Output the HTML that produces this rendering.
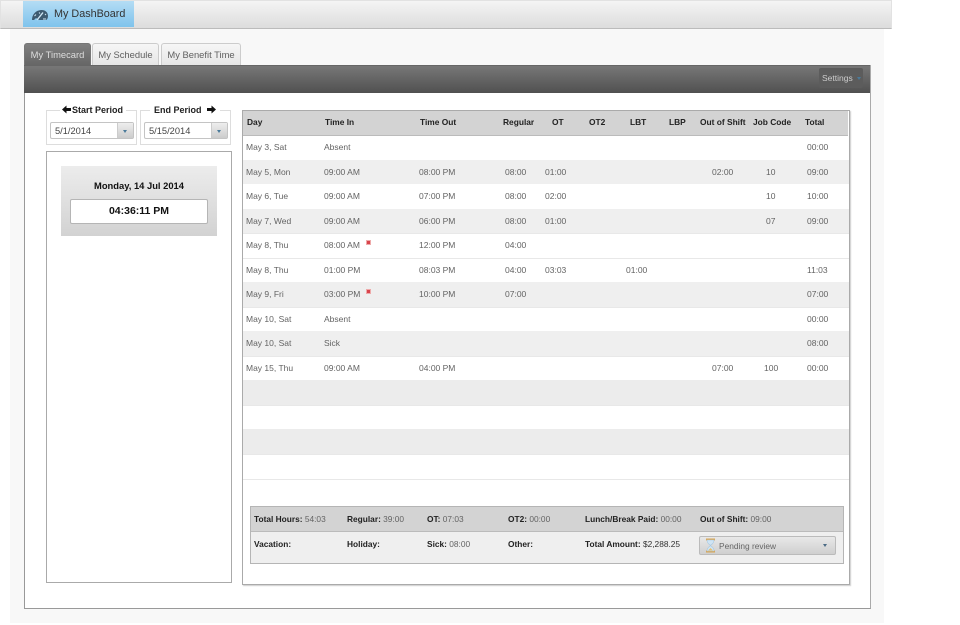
<!DOCTYPE html>
<html><head><meta charset="utf-8"><title>My DashBoard</title>
<style>
html,body{margin:0;padding:0;background:#fff}
body{width:960px;height:625px;position:relative;overflow:hidden;font-family:"Liberation Sans",sans-serif;font-size:8.5px;color:#636363;filter:blur(.3px)}
div,span,svg{position:absolute;box-sizing:border-box}
b{color:#222}
.t{white-space:nowrap;line-height:12px}
.h{white-space:nowrap;line-height:12px;font-weight:bold;color:#222;top:116px;font-size:8.4px}
.s{font-size:8.35px}
.tab{top:43px;height:22px;border:1px solid #ccc;border-bottom:none;border-radius:3px 3px 0 0;background:linear-gradient(#f6f6f6,#e6e6e6);color:#606060;font-size:9.4px;line-height:21px;text-align:center;white-space:nowrap}
.fs{border:1px solid #ddd;background:#fff}
.inp{height:17px;border:1px solid #c4c4c4;border-radius:2px;background:#fff;color:#444;font-size:9.3px;line-height:17px;padding-left:4px}
.btn{right:0;top:0;width:16px;height:15px;border-left:1px solid #ccc;background:linear-gradient(#eee,#ccc)}
.arr{width:0;height:0;border-left:2.5px solid transparent;border-right:2.5px solid transparent;border-top:3px solid #4a7a9a}
.stripe{left:243px;width:606px;background:#efefef}
.line{left:243px;width:606px;height:1px;background:#e8e8e8}
</style></head><body>

<!-- page background -->
<div style="left:10px;top:28px;width:874px;height:595px;background:#f8f8f8"></div>

<!-- top bar -->
<div style="left:0;top:0;width:892px;height:29px;background:linear-gradient(#f4f4f4,#dcdcdc);border:1px solid #e2e2e2;border-bottom:1px solid #bbb"></div>
<div style="left:23px;top:1px;width:111px;height:26px;background:linear-gradient(#b4dcf4,#7fc3ec)"></div>
<svg style="left:31px;top:9px" width="18" height="12" viewBox="0 0 18 12"><path d="M1 11 C1 5 5 1.500 10 1 C14 0.800 17 3 17 7 C17 9 16 11 15 11 L8 11 L5 9 L3 11 Z" fill="#3d5a70"/><path d="M6 11 L12 3.500" stroke="#cfe6f4" stroke-width="1.400"/><path d="M3.500 7 L5 5.500 M8 3.500 L9 4.500 M14 5 L15 6 M12 10 L15 10" stroke="#cfe6f4" stroke-width="1"/></svg>
<div class="t" style="left:54px;top:8px;font-size:10.8px;color:#333">My DashBoard</div>

<!-- main panel -->
<div style="left:24px;top:65px;width:847px;height:544px;background:#fff;border:1px solid #999;border-top:none;border-right:1px solid #aaa"></div>
<div style="left:24px;top:65px;width:846px;height:28px;background:linear-gradient(#777,#505050);border-top:1px solid #666"></div>

<!-- tabs -->
<div class="tab" style="left:24px;width:67px;background:linear-gradient(#808080,#666);border-color:#777;color:#ddd">My Timecard</div>
<div class="tab" style="left:92px;width:67px">My Schedule</div>
<div class="tab" style="left:161px;width:80px">My Benefit Time</div>

<!-- settings -->
<div style="left:819px;top:68px;width:44px;height:20px;background:#5c5c5c;border-radius:2px"></div>
<div class="t" style="left:822px;top:72px;color:#ccc">Settings</div>
<div class="arr" style="left:857px;top:77px;border-top-color:#4a7a9a"></div>

<!-- start / end period -->
<div class="fs" style="left:46px;top:110px;width:91px;height:35px"></div>
<div class="fs" style="left:140px;top:110px;width:91px;height:35px"></div>
<div style="left:60px;top:104px;width:66px;height:12px;background:#fff"></div>
<svg style="left:62px;top:105px" width="9" height="9" viewBox="0 0 9 9"><path d="M0 4.500 L4.500 0.500 L4.500 3 L9 3 L9 6 L4.500 6 L4.500 8.500 Z" fill="#111"/></svg>
<div class="t" style="left:72px;top:104px;font-weight:bold;color:#222;font-size:9px">Start Period</div>
<div style="left:150px;top:104px;width:70px;height:12px;background:#fff"></div>
<div class="t" style="left:154px;top:104px;font-weight:bold;color:#222;font-size:9px">End Period</div>
<svg style="left:207px;top:105px" width="9" height="9" viewBox="0 0 9 9"><path d="M9 4.500 L4.500 0.500 L4.500 3 L0 3 L0 6 L4.500 6 L4.500 8.500 Z" fill="#111"/></svg>
<div class="inp" style="left:50px;top:122px;width:84px">5/1/2014<div class="btn"><div class="arr" style="left:5px;top:7px"></div></div></div>
<div class="inp" style="left:144px;top:122px;width:84px">5/15/2014<div class="btn"><div class="arr" style="left:5px;top:7px"></div></div></div>

<!-- clock panel -->
<div style="left:46px;top:151px;width:186px;height:432px;background:#fff;border:1px solid #aaa"></div>
<div style="left:61px;top:166px;width:156px;height:70px;background:linear-gradient(#ececec,#d2d2d2)"></div>
<div class="t" style="left:61px;top:179px;width:156px;text-align:center;font-weight:bold;color:#111;font-size:9.400px;padding-top:1px">Monday, 14 Jul 2014</div>
<div style="left:70px;top:199px;width:138px;height:25px;background:#fff;border:1px solid #b5b5b5;border-radius:2px;text-align:center;font-weight:bold;color:#111;font-size:10.500px;line-height:23px">04:36:11 PM</div>

<!-- table panel -->
<div style="left:242px;top:110px;width:608px;height:475px;background:#fff;border:1px solid #aaa;box-shadow:1px 1px 1px #ccc"></div>
<div style="left:243px;top:111px;width:605px;height:25px;background:#d3d3d3;border-bottom:1px solid #bbb"></div>
<div class="stripe" style="top:160px;height:24px"></div>
<div class="stripe" style="top:209px;height:24px"></div>
<div class="line" style="top:233px"></div>
<div class="line" style="top:258px"></div>
<div class="stripe" style="top:282px;height:25px"></div>
<div class="line" style="top:307px"></div>
<div class="stripe" style="top:331px;height:25px"></div>
<div class="line" style="top:356px"></div>
<div class="stripe" style="top:380px;height:25px;background:#ececec"></div>
<div class="line" style="top:405px"></div>
<div class="stripe" style="top:429px;height:25px;background:#ececec"></div>
<div class="line" style="top:454px"></div>
<div class="line" style="top:479px"></div>

<!-- headers -->
<div class="h" style="left:247px">Day</div>
<div class="h" style="left:325px">Time In</div>
<div class="h" style="left:420px">Time Out</div>
<div class="h" style="left:503px">Regular</div>
<div class="h" style="left:552px">OT</div>
<div class="h" style="left:589px">OT2</div>
<div class="h" style="left:630px">LBT</div>
<div class="h" style="left:669px">LBP</div>
<div class="h" style="left:700px">Out of Shift</div>
<div class="h" style="left:753px">Job Code</div>
<div class="h" style="left:805px">Total</div>

<!-- rows -->
<div class="t" style="left:246px;top:141px">May 3, Sat</div><div class="t" style="left:324px;top:141px">Absent</div><div class="t" style="left:807px;top:141px">00:00</div>

<div class="t" style="left:246px;top:166px">May 5, Mon</div><div class="t" style="left:324px;top:166px">09:00 AM</div><div class="t" style="left:419px;top:166px">08:00 PM</div><div class="t" style="left:505px;top:166px">08:00</div><div class="t" style="left:545px;top:166px">01:00</div><div class="t" style="left:712px;top:166px">02:00</div><div class="t" style="left:766px;top:166px">10</div><div class="t" style="left:807px;top:166px">09:00</div>

<div class="t" style="left:246px;top:190px">May 6, Tue</div><div class="t" style="left:324px;top:190px">09:00 AM</div><div class="t" style="left:419px;top:190px">07:00 PM</div><div class="t" style="left:505px;top:190px">08:00</div><div class="t" style="left:545px;top:190px">02:00</div><div class="t" style="left:766px;top:190px">10</div><div class="t" style="left:807px;top:190px">10:00</div>

<div class="t" style="left:246px;top:215px">May 7, Wed</div><div class="t" style="left:324px;top:215px">09:00 AM</div><div class="t" style="left:419px;top:215px">06:00 PM</div><div class="t" style="left:505px;top:215px">08:00</div><div class="t" style="left:545px;top:215px">01:00</div><div class="t" style="left:766px;top:215px">07</div><div class="t" style="left:807px;top:215px">09:00</div>

<div class="t" style="left:246px;top:239px">May 8, Thu</div><div class="t" style="left:324px;top:239px">08:00 AM</div><div style="left:366px;top:240px;width:5px;height:5px;background:#d8444c;border:1px solid #eaa"></div><div class="t" style="left:419px;top:239px">12:00 PM</div><div class="t" style="left:505px;top:239px">04:00</div>

<div class="t" style="left:246px;top:264px">May 8, Thu</div><div class="t" style="left:324px;top:264px">01:00 PM</div><div class="t" style="left:419px;top:264px">08:03 PM</div><div class="t" style="left:505px;top:264px">04:00</div><div class="t" style="left:545px;top:264px">03:03</div><div class="t" style="left:626px;top:264px">01:00</div><div class="t" style="left:807px;top:264px">11:03</div>

<div class="t" style="left:246px;top:288px">May 9, Fri</div><div class="t" style="left:324px;top:288px">03:00 PM</div><div style="left:366px;top:289px;width:5px;height:5px;background:#d8444c;border:1px solid #eaa"></div><div class="t" style="left:419px;top:288px">10:00 PM</div><div class="t" style="left:505px;top:288px">07:00</div><div class="t" style="left:807px;top:288px">07:00</div>

<div class="t" style="left:246px;top:313px">May 10, Sat</div><div class="t" style="left:324px;top:313px">Absent</div><div class="t" style="left:807px;top:313px">00:00</div>

<div class="t" style="left:246px;top:337px">May 10, Sat</div><div class="t" style="left:324px;top:337px">Sick</div><div class="t" style="left:807px;top:337px">08:00</div>

<div class="t" style="left:246px;top:362px">May 15, Thu</div><div class="t" style="left:324px;top:362px">09:00 AM</div><div class="t" style="left:419px;top:362px">04:00 PM</div><div class="t" style="left:712px;top:362px">07:00</div><div class="t" style="left:764px;top:362px">100</div><div class="t" style="left:807px;top:362px">00:00</div>

<!-- summary -->
<div style="left:250px;top:506px;width:594px;height:58px;background:#efefef;border:1px solid #b5b5b5"></div>
<div style="left:251px;top:507px;width:592px;height:25px;background:#d3d3d3;border-bottom:1px solid #bbb"></div>
<div class="t s" style="left:254px;top:513px"><b>Total Hours:</b> 54:03</div>
<div class="t s" style="left:347px;top:513px"><b>Regular:</b> 39:00</div>
<div class="t s" style="left:427px;top:513px"><b>OT:</b> 07:03</div>
<div class="t s" style="left:508px;top:513px"><b>OT2:</b> 00:00</div>
<div class="t s" style="left:585px;top:513px"><b>Lunch/Break Paid:</b> 00:00</div>
<div class="t s" style="left:700px;top:513px"><b>Out of Shift:</b> 09:00</div>
<div class="t s" style="left:254px;top:538px"><b>Vacation:</b></div>
<div class="t s" style="left:347px;top:538px"><b>Holiday:</b></div>
<div class="t s" style="left:427px;top:538px"><b>Sick:</b> 08:00</div>
<div class="t s" style="left:508px;top:538px"><b>Other:</b></div>
<div class="t s" style="left:585px;top:538px"><b>Total Amount:</b> <span style="position:static;color:#333">$2,288.25</span></div>

<!-- status dropdown -->
<div style="left:699px;top:536px;width:137px;height:19px;background:linear-gradient(#e8e8e8,#cfcfcf);border:1px solid #bbb;border-radius:2px"></div>
<svg style="left:704px;top:538px" width="13" height="15" viewBox="0 0 13 15"><path d="M2 1.500 H11 M2 13.500 H11" stroke="#d9a654" stroke-width="2"/><path d="M3 2 C3 6 6 6.500 6.500 7.500 C7 6.500 10 6 10 2 Z M3 13 C3 9 6 8.500 6.500 7.500 C7 8.500 10 9 10 13 Z" fill="#cfe4f4" stroke="#a8c8e0" stroke-width="0.600"/><path d="M4 12.500 L6.500 10 L9 12.500 Z" fill="#e8c070"/></svg>
<div class="t s" style="left:719px;top:540px;color:#666">Pending review</div>
<div class="arr" style="left:823px;top:544px;border-top-color:#4a6a84"></div>

</body></html>
